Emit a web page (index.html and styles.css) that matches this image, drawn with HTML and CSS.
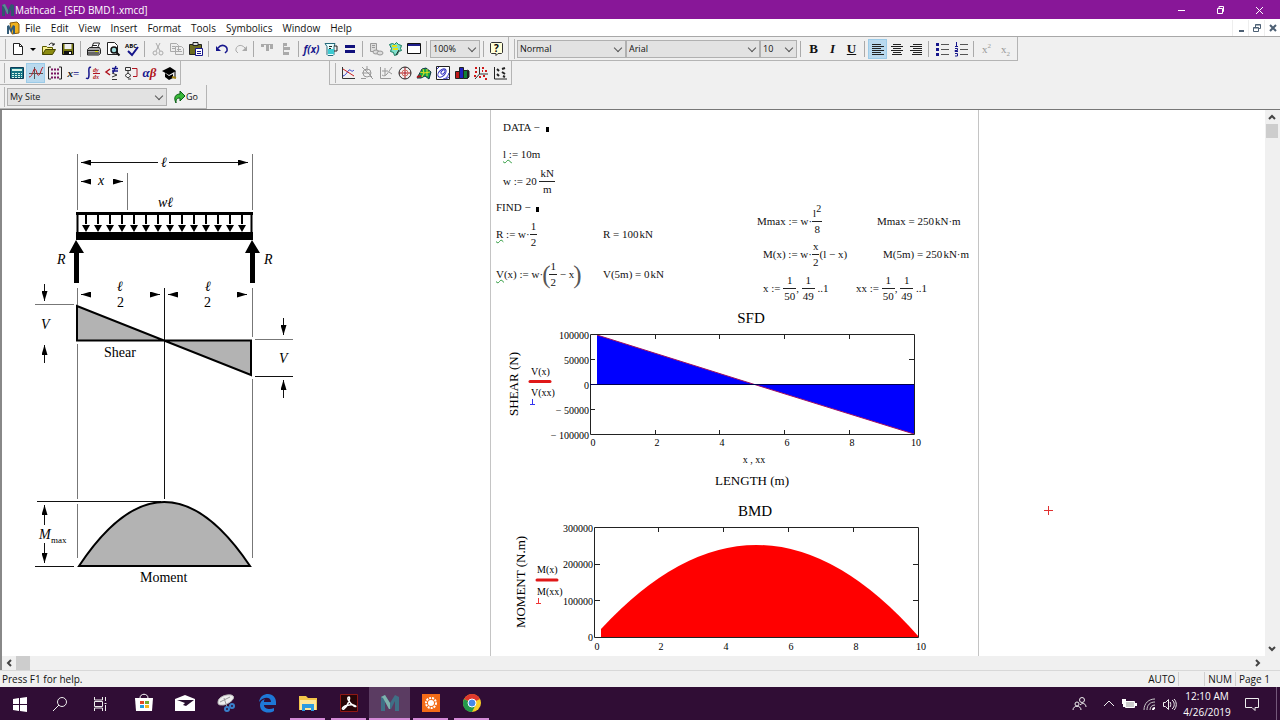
FILE: index.html
```html
<!DOCTYPE html>
<html lang="en">
<head>
  <meta charset="UTF-8" />
  <meta name="viewport" content="width=device-width, initial-scale=1.0"/>
  <title>Mathcad - [SFD BMD1.xmcd]</title>
  <link rel="stylesheet" href="styles.css">
</head>
<body>
  <!-- Title bar -->
  <header class="titlebar">
    <svg class="app-icon" viewBox="0 0 14 14"><path d="M1 13V2l3-1 3 6 3-6 3 1v11h-3V6l-2 5H6L4 6v7z" fill="#31566f"/><path d="M1 2l3-1 3 6v4H6L3 4z" fill="#5c8a94"/></svg>
    <h1>Mathcad - [SFD BMD1.xmcd]</h1>
    <div class="window-buttons">
      <button type="button" aria-label="Minimize"><svg viewBox="0 0 12 12"><path d="M3 6.500h7"/></svg></button>
      <button type="button" aria-label="Restore"><svg viewBox="0 0 12 12"><path d="M3.500 4.500h5v5h-5zM5 4.500v-2h4.500v5h-1"/></svg></button>
      <button type="button" aria-label="Close"><svg viewBox="0 0 12 12"><path d="M3 3l7 7M10 3l-7 7"/></svg></button>
    </div>
  </header>

  <!-- Menu -->
  <nav class="menubar">
    <svg class="doc-icon" viewBox="0 0 14 14"><path d="M4 2l7-1 2 2v9l-7 1z" fill="#f2b21c" stroke="#8b5c0c"/><path d="M1 13V5l2-1 2 4 2-4 2 1v8H7V8L5 12 3 8v5z" fill="#345c78"/></svg>
    <a href="#">File</a>
    <a href="#">Edit</a>
    <a href="#">View</a>
    <a href="#">Insert</a>
    <a href="#">Format</a>
    <a href="#">Tools</a>
    <a href="#">Symbolics</a>
    <a href="#">Window</a>
    <a href="#">Help</a>
    <div class="mdi-buttons">
      <button type="button" aria-label="Minimize sheet"><svg viewBox="0 0 12 12"><path d="M4 9h5" stroke-width="2"/></svg></button>
      <button type="button" aria-label="Restore sheet"><svg viewBox="0 0 12 12"><path d="M2.500 5.500h5v4h-5zM2.500 6h5M4.500 5v-2.500h5v4h-2M4.500 3h5"/></svg></button>
      <button type="button" aria-label="Close sheet"><svg viewBox="0 0 12 12"><path d="M3 3l6 6M9 3L3 9" stroke-width="2"/></svg></button>
    </div>
  </nav>

  <!-- Toolbars -->
  <div class="toolbars">
    <div class="toolbar-row">
      <div class="toolbar">
        <button type="button" aria-label="New"><svg viewBox="0 0 16 16"><path d="M3.500 2.500h6l3 3v8h-9z" fill="#fff" stroke="#222"/><path d="M9.500 2.500v3h3" fill="none" stroke="#222"/></svg></button>
        <button type="button" class="drop" aria-label="New from template"><svg viewBox="0 0 8 8"><path d="M1 3h6L4 6z"/></svg></button>
        <button type="button" aria-label="Open"><svg viewBox="0 0 16 16"><path d="M1.500 13.500v-8h4l1 1h5v2" fill="#f8f090" stroke="#5a5a00"/><path d="M1.500 13.500l3-5h10l-3 5z" fill="#8c8c10" stroke="#444400"/><path d="M8 4c2-3 4-2 5 0m0-2v2h-2" fill="none" stroke="#111"/></svg></button>
        <button type="button" aria-label="Save"><svg viewBox="0 0 16 16"><path d="M2.500 2.500h11v11h-11z" fill="#757510" stroke="#111"/><path d="M4.500 3h7v5h-7z" fill="#eee"/><path d="M4 10h8v4H4z" fill="#111"/><path d="M9 11h2v2H9z" fill="#fff"/></svg></button>
        <span class="sep"></span>
        <button type="button" aria-label="Print"><svg viewBox="0 0 16 16"><path d="M5.500 7l2-5h6l-2 5" fill="#fff" stroke="#222"/><path d="M1.500 8.500l2-2h10l1 2v4l-2 1.500h-11z" fill="#aaa" stroke="#222"/><path d="M2 9.500h11M7 4.500h4M2 12h11" stroke="#222"/><path d="M9 10.500h3" stroke="#dada00"/></svg></button>
        <button type="button" aria-label="Print preview"><svg viewBox="0 0 16 16"><path d="M2.500 1.500h7l3 3v9h-10z" fill="#fff" stroke="#222"/><circle cx="9" cy="9" r="3" fill="#9fdcdc" stroke="#111" stroke-width="1.500"/><path d="M11 11l3.500 3.500" stroke="#111" stroke-width="2"/></svg></button>
        <button type="button" aria-label="Check spelling"><svg viewBox="0 0 16 16"><text x="1" y="7" font-size="6" font-weight="bold">ABC</text><path d="M4 10l4 4 6-8" fill="none" stroke="#15158a" stroke-width="2"/></svg></button>
        <span class="sep"></span>
        <button type="button" aria-label="Cut"><svg viewBox="0 0 16 16" fill="none" stroke="#aaa"><path d="M6 2l4 8M10 2L6 10"/><circle cx="5" cy="12" r="2"/><circle cx="11" cy="12" r="2"/></svg></button>
        <button type="button" aria-label="Copy"><svg viewBox="0 0 16 16" fill="#eee" stroke="#aaa"><path d="M1.500 2.500h6l2 2v6h-8zM6.500 5.500h6l2 2v6h-8z"/><path d="M3 5.500h3M3 7.500h3M8 8.500h4M8 10.500h5"/></svg></button>
        <button type="button" aria-label="Paste"><svg viewBox="0 0 16 16"><path d="M1.500 3.500h12v10h-12z" fill="#6b6b20" stroke="#222"/><path d="M5 1.500h5v3H5z" fill="#ddd" stroke="#222"/><path d="M7.500 7.500h7v7h-7z" fill="#fff" stroke="#16168c"/><path d="M9 10.500h4M9 12.500h4" stroke="#16168c"/></svg></button>
        <span class="sep"></span>
        <button type="button" aria-label="Undo"><svg viewBox="0 0 16 16"><path d="M4 7c4-5 10-2 9 3l-2 2" fill="none" stroke="#16168c" stroke-width="1.500"/><path d="M2 5v5h5z" fill="#16168c"/></svg></button>
        <button type="button" aria-label="Redo"><svg viewBox="0 0 16 16"><path d="M12 7C8 2 2 5 3 10l2 2" fill="none" stroke="#aaa"/><path d="M14 5v5H9z" fill="#aaa"/></svg></button>
        <span class="sep"></span>
        <button type="button" aria-label="Align across"><svg viewBox="0 0 16 16" fill="#aaa"><path d="M2 3h12v1H2zM2 3h3v3H2zM7 3h3v7H7zM11 3h3v5h-3z"/></svg></button>
        <button type="button" aria-label="Align down"><svg viewBox="0 0 16 16" fill="#aaa"><path d="M5 2h1v12H5zM5 2h4v3H5zM5 6h7v3H5zM5 11h6v3H5z"/></svg></button>
        <span class="sep"></span>
        <button type="button" class="fx" aria-label="Insert function"><i>f(x)</i></button>
        <button type="button" aria-label="Insert unit"><svg viewBox="0 0 16 16"><path d="M2 2.500h10l-1 3v8l-1 1H5l-1-1v-8z" fill="#e9ffff" stroke="#256a7b"/><path d="M5 8h6v5H5z" fill="#3dcbd2"/><path d="M11 5h3v5h-3M6 5.500h3M6 7.500h2" fill="none" stroke="#222"/></svg></button>
        <button type="button" aria-label="Calculate"><svg viewBox="0 0 16 16"><path d="M3 4h10v3H3zM3 9h10v3H3z" fill="#10107c"/></svg></button>
        <span class="sep"></span>
        <button type="button" aria-label="Insert hyperlink"><svg viewBox="0 0 16 16" fill="#ddd" stroke="#999"><path d="M2.500 2.500h6v8h-6zM4 4.500h3M4 6.500h3"/><ellipse cx="8" cy="11" rx="3" ry="2"/><ellipse cx="12" cy="12" rx="3" ry="2"/></svg></button>
        <button type="button" aria-label="Insert component"><svg viewBox="0 0 16 16"><path d="M2.500 3.500l3-1 2 1 2-2 2 2 3 1-1 3 1 2-3 1-1 3-3 1-1-3-3-1 1-3z" fill="#80e0cc" stroke="#167a5c"/><path d="M5 5h5M6 8h5" stroke="#e4e418" stroke-width="2"/><path d="M12 9l-3 5" stroke="#222"/></svg></button>
        <button type="button" aria-label="Run control"><svg viewBox="0 0 16 16"><path d="M1.500 2.500h13v10h-13z" fill="#fff" stroke="#111"/><path d="M2 3h12v2H2z" fill="#20208c"/></svg></button>
        <span class="sep"></span>
        <label class="combo zoom"><select aria-label="Zoom"><option>100%</option></select></label>
        <span class="sep"></span>
        <button type="button" aria-label="Help"><svg viewBox="0 0 16 16"><path d="M2.500 1.500h10l1 1v9l-1 1H9l-2 2v-2H2.500l-1-1v-9z" fill="#ffffd8" stroke="#333"/><text x="5" y="11" font-size="10" font-weight="bold">?</text></svg></button>
      </div>
      <div class="toolbar format-bar">
        <label class="combo style"><select aria-label="Style"><option>Normal</option></select></label>
        <label class="combo font"><select aria-label="Font"><option>Arial</option></select></label>
        <label class="combo size"><select aria-label="Font size"><option>10</option></select></label>
        <span class="sep"></span>
        <button type="button" class="glyph"><b>B</b></button>
        <button type="button" class="glyph"><b><i>I</i></b></button>
        <button type="button" class="glyph"><b><u>U</u></b></button>
        <span class="sep"></span>
        <button type="button" class="active" aria-label="Align left"><svg viewBox="0 0 16 16" stroke="#222"><path d="M2 3.500h9M2 5.500h12M2 7.500h9M2 9.500h12M2 11.500h9M2 13.500h12"/></svg></button>
        <button type="button" aria-label="Align center"><svg viewBox="0 0 16 16" stroke="#222"><path d="M4 3.500h8M2 5.500h12M4 7.500h8M2 9.500h12M4 11.500h8M3 13.500h10"/></svg></button>
        <button type="button" aria-label="Align right"><svg viewBox="0 0 16 16" stroke="#222"><path d="M5 3.500h9M2 5.500h12M5 7.500h9M2 9.500h12M5 11.500h9M4 13.500h10"/></svg></button>
        <span class="sep"></span>
        <button type="button" aria-label="Bullets"><svg viewBox="0 0 16 16"><path d="M2 2h3v3H2zM2 7h3v3H2zM2 12h3v3H2z" fill="#16168c"/><path d="M7 3.500h8M7 8.500h8M7 13.500h8" stroke="#555"/></svg></button>
        <button type="button" aria-label="Numbering"><svg viewBox="0 0 16 16"><path d="M3.500 1v4M2 5.500h3M2 7.500h2.500v2H2v1h3M2 12.500h2.500v2.500H2" fill="none" stroke="#16168c"/><path d="M7 3.500h8M7 8.500h8M7 13.500h8" stroke="#555"/></svg></button>
        <span class="sep"></span>
        <button type="button" class="glyph off">x<sup>2</sup></button>
        <button type="button" class="glyph off">x<sub>2</sub></button>
      </div>
    </div>

    <div class="toolbar-row">
      <div class="toolbar math-bar">
        <button type="button" aria-label="Calculator"><svg viewBox="0 0 16 16"><path d="M1.500 2.500h13v11h-13z" fill="#167484" stroke="#0c3c58"/><path d="M3 4h10v2H3z" fill="#d8f4e8"/><path d="M3 8.500h10M3 10.500h10M3 12.500h10" stroke="#d8f4e8" stroke-dasharray="2 1"/></svg></button>
        <button type="button" class="active" aria-label="Graph"><svg viewBox="0 0 16 16" fill="none"><path d="M1 8.500h14M6.500 2v12" stroke="#555"/><path d="M1 12c4 0 4-9 6-8s2 8 4 6 2-6 4-8" stroke="#c01a24"/></svg></button>
        <button type="button" aria-label="Matrix"><svg viewBox="0 0 16 16" fill="none"><path d="M4 2H1.500v12H4M12 2h2.500v12H12" stroke="#222"/><path d="M4 4.500h2M7 4.500h2M10 4.500h2M4 8.500h2M7 8.500h2M10 8.500h2M4 12.500h2M7 12.500h2M10 12.500h2" stroke="#7a1460" stroke-width="2"/></svg></button>
        <button type="button" class="glyph eval"><b><i>x</i>=</b></button>
        <button type="button" aria-label="Calculus"><svg class="calculus" viewBox="0 0 16 16" fill="none"><path d="M6 2.500C3 1 4 7 4 9s0 6-3 4" stroke="#16168c" stroke-width="1.500"/><path d="M8 8.500h7" stroke="#b01420"/><text x="8" y="7">dy</text><text x="8" y="14">dx</text></svg></button>
        <button type="button" aria-label="Boolean"><svg viewBox="0 0 16 16" fill="none"><path d="M6 4L2 7l4 3" stroke="#b01420" stroke-width="1.500"/><path d="M8 3.500h6M8 6h6M12 1L9 8" stroke="#16168c" stroke-width="1.500"/><path d="M8 8l5 2-5 2M8 14.500h5" stroke="#333"/></svg></button>
        <button type="button" aria-label="Programming"><svg viewBox="0 0 16 16" fill="none"><path d="M2.500 2.500h5v3h-5zM5 5.500v3M5 8l3 2.500L5 13l-3-2.500zM8 14h-3" stroke="#333"/><path d="M9 3.500h5v8h-4" stroke="#b01420"/></svg></button>
        <button type="button" class="glyph greek"><b><i>α<em>β</em></i></b></button>
        <button type="button" aria-label="Symbolic"><svg viewBox="0 0 16 16"><path d="M1 6l8-4 6 4-7 4z"/><path d="M4 8l4 3 4-2v4l-4 2-4-3z"/><path d="M14 6v6" stroke="#000"/><path d="M11 12l4 1" stroke="#a08010" stroke-width="2"/></svg></button>
      </div>
      <div class="toolbar graph-bar">
        <button type="button" aria-label="X-Y plot"><svg viewBox="0 0 16 16" fill="none"><path d="M2.500 2v11.500H15" stroke="#333"/><path d="M3 11c4-1 5-7 7-6s2 2 4 0" stroke="#2436cc"/><path d="M3 4l11 7" stroke="#cc2020"/></svg></button>
        <button type="button" aria-label="Zoom graph"><svg viewBox="0 0 16 16" fill="none" stroke="#999"><circle cx="8" cy="8" r="4"/><path d="M2 13.500h5M11 11l3 3M3 2l10 10M8 1v5M3 8h9"/></svg></button>
        <button type="button" aria-label="Trace"><svg viewBox="0 0 16 16" fill="none" stroke="#999"><path d="M2.500 2v11.500H13M4 10c4 3 6-3 10-8M4 6h6M7 3v8M11 7l3 2"/></svg></button>
        <button type="button" aria-label="Polar plot"><svg viewBox="0 0 16 16" fill="none"><path d="M2 8h12M8 2v12" stroke="#b01420"/><circle cx="8" cy="8" r="3" stroke="#d07060"/><circle cx="8" cy="8" r="6" stroke="#222"/></svg></button>
        <button type="button" aria-label="Surface plot"><svg viewBox="0 0 16 16"><path d="M1 13l5-9 4-1 5 4-2 7-4-3-4 2z" fill="#12a64c" stroke="#134"/><path d="M4 7l4 1 6-1M7 4l1 4-2 4M11 4v7" fill="none" stroke="#e8e020"/><path d="M1 12l4-1" stroke="#b01420" stroke-width="2"/></svg></button>
        <button type="button" aria-label="Contour plot"><svg viewBox="0 0 16 16" fill="#fff"><path d="M1.500 1.500h13v13h-13z" stroke="#222"/><g stroke="#3030c0" fill="none"><ellipse cx="7" cy="8" rx="5" ry="3" transform="rotate(-45 7 8)"/><ellipse cx="8" cy="7" rx="2.500" ry="1.500" transform="rotate(-45 8 7)"/><path d="M8 14c3 0 5-3 6-6M2 4l2-2M11 14l3-2"/></g></svg></button>
        <button type="button" aria-label="3D bar plot"><svg viewBox="0 0 16 16" stroke="#222"><path d="M1.500 6.500h4v7h-4z" fill="#c01818"/><path d="M5.500 2.500h4v11h-4z" fill="#2020c0"/><path d="M9.500 5.500h4v8h-4z" fill="#108038"/><path d="M13.500 5l1.500 1v6l-1.500 1.500" fill="#222"/></svg></button>
        <button type="button" aria-label="3D scatter plot"><svg viewBox="0 0 16 16" fill="none"><path d="M6.500 2v7H15M6.500 9L2 14" stroke="#333"/><path d="M2 3h2M2 7h2M9 3h2M12 6h2M9 6h1M6 12h2M10 11h2M12 14h2M1 11h2" stroke="#d01818" stroke-width="2"/></svg></button>
        <button type="button" aria-label="Vector field plot"><svg viewBox="0 0 16 16" fill="none" stroke="#222"><path d="M2.500 2v12H15"/><path d="M5 4l2 2M5 9l2 2M10 4l3-1M10 7l3 2M11 11l2 1" stroke-width="2"/></svg></button>
      </div>
    </div>

    <div class="toolbar-row">
      <div class="toolbar site-bar">
        <label class="combo site"><select aria-label="Site"><option>My Site</option></select></label>
        <button type="button" class="go"><svg viewBox="0 0 12 16"><path d="M2 14c-3-6 0-9 4-9V2l5 5-5 5V9c-3 0-4 1-4 5z" fill="#38b838" stroke="#0b5c16"/></svg>Go</button>
      </div>
    </div>
  </div>

  <!-- Worksheet -->
  <main class="workspace">
    <section class="sheet">
      <svg class="beam" viewBox="28 145 274 445">
        <defs>
          <marker id="end" viewBox="0 0 10 6" refX="10" refY="3" markerWidth="10" markerHeight="6" markerUnits="userSpaceOnUse" orient="auto"><path d="M0 0l10 3-10 3z" fill="#000" stroke="none"/></marker>
        </defs>
        <g class="thin">
          <path class="grey" d="M77.500 154v56M252.500 154v56M127.500 173v37M77.500 288v17M252.500 288v49M77.500 344v155M252.500 379v120M77.500 504v54M252.500 499v59M35 304.500h39M255 339.500h38"/>
          <path d="M164.500 288v211M255 376.500h38M37 501.500h124M35 566.500h39"/>
          <path marker-end="url(#end)" d="M158 162.500H81"/>
          <path marker-end="url(#end)" d="M169 162.500H248"/>
          <g marker-end="url(#end)">
            <path d="M86 181.500H81"/><path d="M118 181.500h5"/><path d="M85 294.500h-4"/><path d="M156 294.500h4"/><path d="M173 294.500h-5"/><path d="M243 294.500h4"/>
            <path d="M44.500 284v17"/><path d="M44.500 363v-18"/><path d="M283.500 318v17"/><path d="M283.500 398v-18"/>
            <path d="M44.500 525v-20"/><path d="M44.500 543v20"/>
          </g>
        </g>
        <path d="M77.500 213.500h174v22h-174z" fill="#fff" stroke="#000" stroke-width="2"/>
        <path d="M76 212h177v3H76zM76 232h177v8H76z"/>
        <path class="load" d="M86 215v9M98 215v9M110 215v9M122 215v9M134 215v9M146 215v9M158 215v9M170 215v9M182 215v9M194 215v9M206 215v9M218 215v9M230 215v9M242 215v9"/>
        <path d="M82 225h8l-4 7zM94 225h8l-4 7zM106 225h8l-4 7zM118 225h8l-4 7zM130 225h8l-4 7zM142 225h8l-4 7zM154 225h8l-4 7zM166 225h8l-4 7zM178 225h8l-4 7zM190 225h8l-4 7zM202 225h8l-4 7zM214 225h8l-4 7zM226 225h8l-4 7zM238 225h8l-4 7z"/>
        <path d="M76 240l8 13h-5v30h-5v-30h-5zM252 240l8 13h-5v30h-5v-30h-5z"/>
        <path class="area" d="M77 306v34.500h174V375z"/>
        <path class="area" d="M79 566Q164 438 250 566z"/>
        <g class="label">
          <text x="161" y="167"><tspan class="it">ℓ</tspan></text>
          <text class="it" x="98" y="185">x</text>
          <text class="it" x="158" y="207">wℓ</text>
          <text class="it" x="57" y="264">R</text>
          <text class="it" x="264" y="264">R</text>
          <text class="it" x="117" y="291">ℓ</text><text x="117" y="307">2</text>
          <text class="it" x="205" y="291">ℓ</text><text x="204" y="307">2</text>
          <text class="it" x="41" y="329">V</text>
          <text class="it" x="279" y="363">V</text>
          <text x="104" y="357">Shear</text>
          <text class="it" x="39" y="539">M</text><text class="small" x="51" y="543">max</text>
          <text x="140" y="582">Moment</text>
        </g>
      </svg>

      <div class="page-column"></div>

      <p class="math r-data">DATA − <span class="hole"></span></p>
      <p class="math r-l"><span class="warn">l :</span>= 10m</p>
      <p class="math r-w">w := 20 <span class="frac"><span>kN</span><span>m</span></span></p>
      <p class="math r-find">FIND − <span class="hole"></span></p>
      <p class="math r-react"><span class="warn">R</span> := w·<span class="frac"><span>1</span><span>2</span></span></p>
      <p class="math r-react-val">R = 100<span class="unit">kN</span></p>
      <p class="math r-shear"><span class="warn">V</span>(x) := w·<span class="paren">(</span><span class="frac"><span>1</span><span>2</span></span> − x<span class="paren">)</span></p>
      <p class="math r-shear-val">V(5m) = 0<span class="unit">kN</span></p>
      <p class="math r-mmax">Mmax := w·<span class="frac"><span>l<sup>2</sup></span><span>8</span></span></p>
      <p class="math r-mmax-val">Mmax = 250<span class="unit">kN·m</span></p>
      <p class="math r-moment">M(x) := w·<span class="frac"><span>x</span><span>2</span></span>(l − x)</p>
      <p class="math r-moment-val">M(5m) = 250<span class="unit">kN·m</span></p>
      <p class="math r-x">x := <span class="frac"><span>1</span><span>50</span></span>, <span class="frac"><span>1</span><span>49</span></span> ..1</p>
      <p class="math r-xx">xx := <span class="frac"><span>1</span><span>50</span></span>, <span class="frac"><span>1</span><span>49</span></span> ..1</p>

      <!-- Shear force diagram -->
      <svg class="plot sfd" viewBox="500 306 430 186">
        <path fill="#00f" d="M597 335v49h317v50L753 384z"/>
        <path class="trace" d="M597 335l156 49 161 50"/>
        <path class="frame" d="M590.500 334.500h324v100h-324zM590 359.500h5M914 359.500h-5M590 409.500h5M655.500 335v4M719.500 335v4M784.500 335v4M849.500 335v4M655.500 434v-4M719.500 434v-4M784.500 434v-4M849.500 434v-4"/>
        <path stroke="#000050" d="M590 384.500h324"/>
        <g class="ticks y"><text x="589" y="339">100000</text><text x="589" y="364">50000</text><text x="589" y="389">0</text><text x="589" y="414">− 50000</text><text x="589" y="439">− 100000</text></g>
        <g class="ticks x"><text x="593" y="446">0</text><text x="657" y="446">2</text><text x="722" y="446">4</text><text x="787" y="446">6</text><text x="852" y="446">8</text><text x="916" y="446">10</text><text x="754" y="463">x , xx</text></g>
        <text class="heading" x="751" y="323">SFD</text>
        <text class="axis" x="752" y="485">LENGTH (m)</text>
        <text class="axis" transform="translate(518 384) rotate(-90)">SHEAR (N)</text>
        <text class="key" x="531" y="375">V(x)</text><text class="key" x="531" y="396">V(xx)</text>
        <path stroke="#e01818" stroke-width="3" stroke-linecap="round" d="M530 381.500h20"/>
        <path stroke="#3434f0" d="M532.500 399v5M530 404.500h5"/>
      </svg>

      <!-- Bending moment diagram -->
      <svg class="plot bmd" viewBox="510 500 420 155">
        <path fill="#f00" d="M601 637v-8Q760 457 919 637z"/>
        <path class="frame" d="M594.500 527.500h324v110h-324zM595 564.500h5M918 564.500h-5M595 600.500h5M918 600.500h-5M658.500 528v4M723.500 528v4M788.500 528v4M853.500 528v4"/>
        <g class="ticks y"><text x="593" y="532">300000</text><text x="593" y="568">200000</text><text x="593" y="605">100000</text><text x="593" y="641">0</text></g>
        <g class="ticks x"><text x="597" y="650">0</text><text x="661" y="650">2</text><text x="726" y="650">4</text><text x="791" y="650">6</text><text x="856" y="650">8</text><text x="921" y="650">10</text></g>
        <text class="heading" x="755" y="516">BMD</text>
        <text class="axis" transform="translate(525 582) rotate(-90)">MOMENT (N.m)</text>
        <text class="key" x="537" y="573">M(x)</text><text class="key" x="537" y="595">M(xx)</text>
        <path stroke="#e01818" stroke-width="3" stroke-linecap="round" d="M537 580h20"/>
        <path stroke="#f03434" d="M538.500 598v5M536 603.500h5"/>
      </svg>

      <svg class="crosshair" viewBox="0 0 9 9"><path d="M4.500 0v9M0 4.500h9" stroke="#e03030"/></svg>
    </section>

    <div class="scrollbar vertical">
      <button type="button" aria-label="Scroll up"><svg viewBox="0 0 8 8"><path d="M1 6l3-3 3 3"/></svg></button>
      <div class="thumb"></div>
      <button type="button" aria-label="Scroll down"><svg viewBox="0 0 8 8"><path d="M1 2l3 3 3-3"/></svg></button>
    </div>
    <div class="scrollbar horizontal">
      <button type="button" aria-label="Scroll left"><svg viewBox="0 0 8 8"><path d="M6 1L3 4l3 3"/></svg></button>
      <div class="thumb"></div>
      <button type="button" aria-label="Scroll right"><svg viewBox="0 0 8 8"><path d="M2 1l3 3-3 3"/></svg></button>
    </div>
  </main>

  <!-- Status bar -->
  <div class="statusbar">
    <span class="hint">Press F1 for help.</span>
    <span class="auto">AUTO</span>
    <span class="blank"></span>
    <span class="num">NUM</span>
    <span class="pageno">Page 1</span>
  </div>

  <!-- Taskbar -->
  <footer class="taskbar">
    <div class="system">
      <button type="button" aria-label="Start"><svg viewBox="0 0 16 16" fill="#fff"><path d="M1 3l6-1v6H1zM8 2l7-1v7H8zM1 9h6v6l-6-1zM8 9h7v7l-7-1z"/></svg></button>
      <button type="button" aria-label="Search"><svg viewBox="0 0 16 16" fill="none" stroke="#eee"><circle cx="10" cy="6" r="4.500"/><path d="M7 9l-6 6"/></svg></button>
      <button type="button" aria-label="Task view"><svg viewBox="0 0 16 16" fill="none" stroke="#eee"><path d="M2.500 1v3h8V1M2.500 15v-3h8v3M2.500 5.500h8v5h-8zM13.500 1v4M13.500 9v6M12.500 7.500h2"/></svg></button>
    </div>
    <div class="apps">
      <button type="button" aria-label="Store"><svg viewBox="0 0 20 20"><path d="M6 5c0-5 8-5 8 0" fill="none" stroke="#fff"/><path d="M1 5h18l-1 13H2z" fill="#fff"/><path d="M6 8h4v3H6z" fill="#e24a26"/><path d="M11 8h4v3h-4z" fill="#74ad2e"/><path d="M6 12h4v3H6z" fill="#22a0e0"/><path d="M11 12h4v3h-4z" fill="#f6b71c"/></svg></button>
      <button type="button" aria-label="Mail"><svg viewBox="0 0 20 20"><path d="M0 6l10-4 10 4v12H0z" fill="#fff"/><path d="M2 7h17l-8 6-3-1 2-2z" fill="#291030"/></svg></button>
      <button type="button" aria-label="Snip"><svg viewBox="0 0 20 20"><path d="M2 9c0-6 12-9 15-6s-6 9-10 9-5 0-5-3z" fill="#eee" stroke="#bbb"/><path d="M4 9l10-5M8 5l3 9" stroke="#999"/><g fill="none" stroke="#3980cc" stroke-width="2"><circle cx="11" cy="16" r="2"/><circle cx="16" cy="13" r="2"/></g></svg></button>
      <button type="button" aria-label="Edge"><svg viewBox="0 0 20 20"><path d="M2 9C3 3 7 1 11 1c5 0 8 4 8 8v3H7c0 4 6 5 10 3v3c-5 3-14 2-14-6 0-3 2-5 5-6-1 1-1 2-1 3h7c0-5-7-6-12 0z" fill="#1e78d7"/></svg></button>
      <button type="button" class="running" aria-label="File Explorer"><svg viewBox="0 0 20 20"><path d="M1 3h7l2 2h9v12H1z" fill="#f3c64a"/><path d="M2 7h16v10H2z" fill="#ffe69a"/><path d="M4 11h12v7h-3v-3H7v3H4z" fill="#2d9be0"/></svg></button>
      <button type="button" class="running" aria-label="Acrobat Reader"><svg viewBox="0 0 20 20"><path d="M1.500 1.500h17v17h-17z" fill="#270608" stroke="#8f1815"/><path d="M10 4c-3 0 0 6 5 9 4 2 1-2-5-1-7 1-8 5-5 4 3-2 7-11 5-12z" fill="none" stroke="#fff" stroke-width="1.500"/></svg></button>
      <button type="button" class="running current" aria-label="Mathcad"><svg viewBox="0 0 20 20"><path d="M1 18V4l4-2 5 8 5-8 4 2v14h-4V8l-4 8H9L5 8v10z" fill="#3f7086"/><path d="M1 4l4-2 5 8v6H9L3 5z" fill="#7fb3ad"/></svg></button>
      <button type="button" class="running" aria-label="Recorder"><svg viewBox="0 0 20 20"><path d="M1 1h18v18H1z" fill="#f36b17"/><circle cx="10" cy="10" r="5" fill="none" stroke="#fff" stroke-width="2" stroke-dasharray="2 1"/><circle cx="10" cy="10" r="3" fill="#fff"/></svg></button>
      <button type="button" class="running" aria-label="Chrome"><svg viewBox="0 0 20 20"><circle cx="10" cy="10" r="9" fill="#f7cd26"/><path d="M10 10L2 6c4-7 13-6 16 0z" fill="#df382d"/><path d="M10 10L2 6c-3 6 1 13 8 13l4-8z" fill="#24994c"/><circle cx="10" cy="10" r="4" fill="#4688e8" stroke="#fff"/></svg></button>
    </div>
    <div class="tray">
      <button type="button" aria-label="People"><svg viewBox="0 0 16 16" fill="none" stroke="#eee"><circle cx="11" cy="4" r="2.500"/><circle cx="6" cy="8" r="2"/><path d="M2 14c0-5 8-5 8 0M9 9c3-3 6-1 6 2"/></svg></button>
      <button type="button" class="up" aria-label="Show hidden icons"><svg viewBox="0 0 16 16" fill="none" stroke="#eee"><path d="M3 10l5-5 5 5"/></svg></button>
      <button type="button" aria-label="Battery"><svg viewBox="0 0 16 16"><path d="M4.500 5.500h9v6h-9z" fill="#ccc" stroke="#fff"/><path d="M14 7h2v3h-2zM1 3h4v5H4v3H2V8H1z" fill="#fff"/></svg></button>
      <button type="button" aria-label="Network"><svg viewBox="0 0 16 16" fill="none" stroke="#ccc"><path d="M3 14C3 7 8 3 14 3M6 14c0-5 3-8 8-8M9 14c0-3 2-5 5-5"/><path d="M12 14c0-1 1-2 2-2" stroke="#fff" stroke-width="2"/></svg></button>
      <button type="button" aria-label="Volume"><svg viewBox="0 0 16 16" fill="none" stroke="#eee"><path d="M2.500 6.500h2l3-3v10l-3-3h-2zM9 6c1 1 1 4 0 5M11 4c3 2 3 7 0 9M13 3c3 3 3 8 0 11"/></svg></button>
      <div class="clock"><span>12:10 AM</span><span>4/26/2019</span></div>
      <button type="button" class="notes" aria-label="Notifications"><svg viewBox="0 0 16 16" fill="none" stroke="#eee"><path d="M1.500 2.500h13v9H11v3l-3-3H1.500z"/></svg></button>
      <button type="button" class="desktop" aria-label="Show desktop"></button>
    </div>
  </footer>
</body>
</html>
```
FILE: styles.css
```css
* {
  box-sizing: border-box;
}

body {
  margin: 0;
  height: 100vh;
  display: flex;
  flex-direction: column;
  overflow: hidden;
  background-color: #f0f0f0;
  color: #111;
  font-family: 'Open Sans', 'Noto Sans', sans-serif;
  font-size: 10px;
}

button {
  border: none;
  background: none;
  padding: 0;
  margin: 0;
  color: inherit;
  font: inherit;
  display: flex;
  align-items: center;
  justify-content: center;
}

svg {
  display: block;
  flex: none;
}

/* title bar */
.titlebar {
  display: flex;
  align-items: center;
  height: 19px;
  padding: 0 2px 0 1px;
  background-color: #881798;
  color: #fff;
}

.titlebar h1 {
  flex: 1;
  margin: 0;
  font-size: 10px;
  font-weight: normal;
}

.app-icon, .doc-icon {
  width: 14px;
  height: 14px;
}

.window-buttons, .mdi-buttons {
  display: flex;
}

.window-buttons button {
  width: 39px;
}

.window-buttons svg, .mdi-buttons svg {
  width: 12px;
  height: 12px;
  fill: none;
  stroke: #fff;
}

/* menu */
.menubar {
  display: flex;
  align-items: center;
  gap: 10px;
  height: 18px;
  padding-left: 6px;
  background-color: #fff;
  border-bottom: 1px solid #a8a8a8;
}

.menubar a {
  color: #111;
  text-decoration: none;
}

.menubar .doc-icon {
  margin-right: -5px;
}

.mdi-buttons {
  margin-left: auto;
}

.mdi-buttons button {
  width: 16px;
  height: 16px;
  border-left: 1px solid #eee;
}

.mdi-buttons svg {
  stroke: #4d6074;
}

/* toolbars */
.toolbars {
  border-bottom: 1px solid #777;
}

.toolbar-row {
  display: flex;
  height: 24px;
}

.toolbar {
  display: flex;
  align-items: center;
  padding: 0 2px 0 3px;
  border-right: 1px solid #b4b4b4;
  border-bottom: 1px solid #b4b4b4;
}

.toolbar::before {
  content: "";
  width: 2px;
  height: 20px;
  margin-right: 2px;
  border-right: 1px solid #b4b4b4;
}

.toolbar button {
  width: 19px;
  height: 20px;
}

.toolbar svg {
  width: 16px;
  height: 16px;
}

.toolbar .drop {
  width: 12px;
}

.toolbar .drop svg {
  width: 8px;
  height: 8px;
}

.toolbar .active {
  background-color: #b9d9ee;
  border: 1px solid #9ccbe8;
}

.sep {
  width: 1px;
  height: 16px;
  margin: 0 3px;
  background-color: #aaa;
}

.toolbar .fx {
  color: #16168c;
  font-size: 10px;
  font-weight: bold;
}

.toolbar .glyph {
  display: block;
  font-family: 'Liberation Serif', serif;
  font-size: 13px;
  line-height: 20px;
}

.toolbar .off {
  color: #999;
  font-size: 11px;
}

.off sup, .off sub {
  font-size: 7px;
  line-height: 7px;
}

.toolbar .eval {
  color: #16168c;
  font-size: 11px;
}

.eval i {
  color: #111;
}

.toolbar .greek {
  color: #16168c;
}

.greek em {
  color: #b01420;
}

.calculus text {
  fill: #b01420;
  font-family: 'Liberation Serif', serif;
  font-size: 6px;
  font-style: italic;
  font-weight: bold;
}

.combo {
  position: relative;
  height: 18px;
}

.combo select {
  appearance: none;
  width: 100%;
  height: 18px;
  padding: 0 2px;
  border: 1px solid #b0b0b0;
  border-radius: 0;
  background-color: #e2e2e2;
  color: #111;
  font: inherit;
  font-size: 9px;
}

/* drop-down chevron */
.combo::after {
  content: "";
  position: absolute;
  right: 5px;
  top: 5px;
  width: 5px;
  height: 5px;
  border-right: 1px solid #555;
  border-bottom: 1px solid #555;
  transform: rotate(45deg);
}

.zoom {
  width: 50px;
}

.style {
  width: 109px;
}

.font {
  width: 134px;
}

.size {
  width: 37px;
}

.math-bar {
  padding-left: 2px;
}

.graph-bar {
  margin-left: 148px;
  border-left: 1px solid #b4b4b4;
}

.site-bar {
  padding-left: 2px;
  padding-right: 8px;
}

.site {
  width: 160px;
}

.toolbar .go {
  width: auto;
  margin-left: 7px;
  font-size: 9px;
}

.go svg {
  width: 12px;
  height: 16px;
}

/* worksheet */
.workspace {
  flex: 1;
  min-height: 0;
  display: grid;
  grid-template-columns: 1fr 15px;
  grid-template-rows: 1fr 14px;
  border-left: 2px solid #888;
}

.sheet {
  position: relative;
  overflow: hidden;
  background-color: #fff;
  font-family: 'Liberation Serif', serif;
}

.beam {
  position: absolute;
  left: 26px;
  top: 35px;
  width: 274px;
  height: 445px;
}

.thin {
  fill: none;
  stroke: #111;
}

.thin .grey {
  stroke: #777;
}

.beam .load {
  stroke: #000;
  stroke-width: 2;
}

.area {
  fill: #b3b3b3;
  stroke: #000;
  stroke-width: 2;
}

.label {
  font-size: 14px;
}

.label .it {
  font-style: italic;
}

.label .small {
  font-size: 9px;
}

.page-column {
  position: absolute;
  left: 488px;
  top: 0;
  bottom: 0;
  width: 489px;
  border-left: 1px solid #c4c4c4;
  border-right: 1px solid #c4c4c4;
}

/* math regions, placed freely on the sheet */
.math {
  position: absolute;
  display: flex;
  align-items: center;
  margin: 0;
  font-size: 11px;
  line-height: 15px;
  white-space: pre;
}

.frac {
  display: flex;
  flex-direction: column;
  text-align: center;
}

.frac > span {
  padding: 0 1px;
}

.frac > span:first-child {
  border-bottom: 1px solid #222;
}

.frac sup {
  font-size: 10px;
  line-height: 0;
}

.unit {
  margin-left: 1px;
}

.hole {
  width: 3px;
  height: 5px;
  margin: 4px 0 0 3px;
  background-color: #000;
}

.paren {
  margin: 0 -1px;
  color: #555;
  font-size: 25px;
}

.warn {
  text-decoration: underline wavy #2c9a3c 1px;
}

.r-data { left: 501px; top: 10px; }
.r-l { left: 501px; top: 37px; }
.r-w { left: 501px; top: 56px; }
.r-find { left: 494px; top: 90px; }
.r-react { left: 494px; top: 109px; }
.r-react-val { left: 601px; top: 117px; }
.r-shear { left: 494px; top: 149px; }
.r-shear-val { left: 601px; top: 157px; }
.r-mmax { left: 755px; top: 96px; }
.r-mmax-val { left: 875px; top: 104px; }
.r-moment { left: 761px; top: 129px; }
.r-moment-val { left: 881px; top: 137px; }
.r-x { left: 761px; top: 163px; }
.r-xx { left: 854px; top: 163px; }

/* plots */
.plot {
  position: absolute;
}

.sfd {
  left: 498px;
  top: 196px;
  width: 430px;
  height: 186px;
}

.bmd {
  left: 508px;
  top: 390px;
  width: 420px;
  height: 155px;
}

.frame {
  fill: none;
  stroke: #222;
}

.trace {
  fill: none;
  stroke: #a01060;
}

.ticks, .key {
  font-size: 10px;
}

.ticks.y {
  text-anchor: end;
}

.ticks.x, .heading, .axis {
  text-anchor: middle;
}

.heading {
  font-size: 15px;
}

.axis {
  font-size: 13px;
}

.crosshair {
  position: absolute;
  left: 1042px;
  top: 396px;
  width: 9px;
  height: 9px;
}

/* scrollbars */
.scrollbar {
  display: flex;
  background-color: #f0f0f0;
}

.scrollbar button {
  width: 14px;
  height: 14px;
}

.scrollbar svg {
  width: 8px;
  height: 8px;
  fill: none;
  stroke: #444;
  stroke-width: 2;
}

.thumb {
  width: 14px;
  height: 14px;
  background-color: #cdcdcd;
}

.vertical {
  flex-direction: column;
}

.vertical .thumb {
  width: 12px;
  margin-left: 1px;
}

.scrollbar button:last-child {
  margin-top: auto;
}

.horizontal button:last-child {
  margin-left: auto;
}

/* status bar */
.statusbar {
  display: flex;
  align-items: center;
  height: 17px;
  border-top: 1px solid #d8d8d8;
  padding-left: 2px;
}

.statusbar span {
  line-height: 14px;
}

.hint {
  flex: 1;
}

.auto, .blank, .num, .pageno {
  height: 14px;
  padding: 0 3px;
  border-right: 1px solid #d0d0d0;
}

.blank {
  width: 26px;
}

.statusbar .pageno {
  width: 44px;
  border-right: none;
}

/* taskbar */
.taskbar {
  display: flex;
  height: 33px;
  background-color: #300d35;
  color: #fff;
}

.system, .apps {
  display: flex;
}

.system button {
  width: 40px;
}

.system svg, .tray svg {
  width: 16px;
  height: 16px;
}

.apps {
  margin-left: 3px;
}

.apps button {
  width: 41px;
  border-bottom: 2px solid transparent;
}

.apps svg {
  width: 20px;
  height: 20px;
}

.apps .running {
  width: 35px;
  margin: 0 3px;
  border-bottom-color: #d58ad8;
}

.apps .current {
  width: 41px;
  margin: 0;
  background-color: #5b3c62;
}

.tray {
  display: flex;
  align-items: center;
  margin-left: auto;
  padding-right: 3px;
}

.tray button {
  width: 20px;
  height: 33px;
}

.tray .up {
  margin-left: 10px;
}

.clock {
  display: flex;
  flex-direction: column;
  align-items: center;
  width: 56px;
  line-height: 16px;
}

.tray .notes {
  width: 34px;
}

.tray .desktop {
  width: 8px;
  border-right: 1px solid #74587a;
}
```
